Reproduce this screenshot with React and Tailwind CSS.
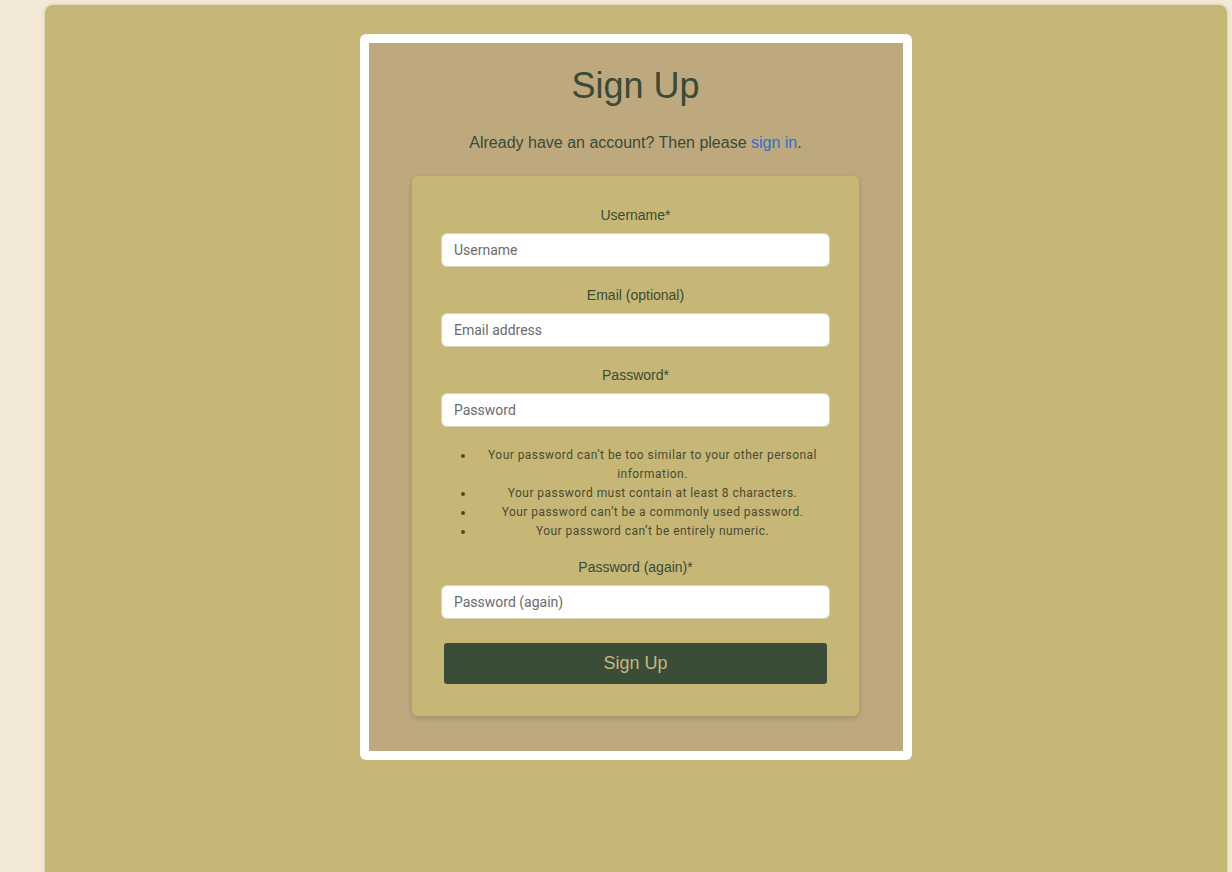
export default function App() {
  const fields1 = [
    { label: "Username*", ph: "Username", type: "text" },
    { label: "Email (optional)", ph: "Email address", type: "email" },
    { label: "Password*", ph: "Password", type: "password" },
  ];
  const rules = [
    "Your password can\u2019t be too similar to your other personal information.",
    "Your password must contain at least 8 characters.",
    "Your password can\u2019t be a commonly used password.",
    "Your password can\u2019t be entirely numeric.",
  ];
  const labelCls =
    "block text-center text-[14px] leading-[20px] text-[#3a4a35] mb-2 font-['Liberation_Sans',Arial,sans-serif]";
  const inputCls =
    "block w-full h-[34px] rounded-[6px] bg-white border border-[#d8d2c0] px-3 text-[14px] text-[#333] placeholder:text-[#6c6c6c] font-['Roboto',sans-serif] outline-none";
  return (
    <div className="min-h-[872px] bg-[#f4e9d6] pt-[5px] pl-[45px] pr-[5px] font-['Liberation_Sans',Arial,sans-serif]">
      <div className="min-h-[867px] bg-[#c7b776] rounded-t-[8px] shadow-[0_0_4px_rgba(0,0,0,0.15)] pt-[29px] flex justify-center items-start">
        <div className="w-[552px] bg-white rounded-[6px] p-[9px]">
          <div className="bg-[#bea97f] pt-[21px] pb-[35px] pl-[43px] pr-[44px]">
            <h1 className="text-center text-[36px] leading-[43px] text-[#3a4a35]">Sign Up</h1>
            <p className="mt-[24px] text-center text-[16px] leading-[24px] text-[#3a4a35]">
              Already have an account? Then please{" "}
              <a href="#" className="text-[#2f6fd6]">sign in</a>.
            </p>
            <div className="mt-[21px] bg-[#c7b776] rounded-[6px] shadow-[0_2px_6px_rgba(0,0,0,0.18)] px-[29px] pt-[29px] pb-[32px]">
              {fields1.map((f, i) => (
                <div key={f.label} className={i < 2 ? "mb-[18px]" : ""}>
                  <label className={labelCls}>{f.label}</label>
                  <input type={f.type} placeholder={f.ph} className={inputCls} />
                </div>
              ))}
              <ul className="list-disc pl-[34px] mt-[19px] mb-[16px] text-center text-[12px] leading-[19px] tracking-[0.45px] text-[#4a4a32] font-['Roboto',sans-serif]">
                {rules.map((r) => (
                  <li key={r}>{r}</li>
                ))}
              </ul>
              <div>
                <label className={labelCls}>Password (again)*</label>
                <input type="password" placeholder="Password (again)" className={inputCls} />
              </div>
              <button className="block mt-[24px] mx-[3px] w-[383px] h-[41px] rounded-[3px] bg-[#3a4d37] text-[#c6b784] text-[18px] font-['Liberation_Sans',Arial,sans-serif]">
                Sign Up
              </button>
            </div>
          </div>
        </div>
      </div>
    </div>
  );
}
